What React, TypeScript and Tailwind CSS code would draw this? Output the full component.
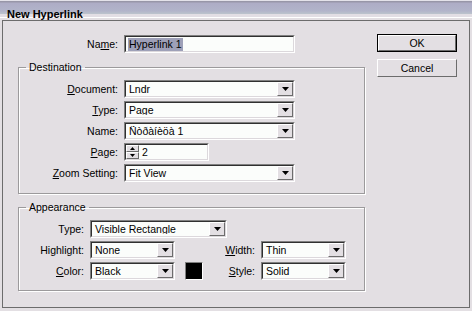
import React from "react";

const face = "font-['Liberation_Sans',Arial,sans-serif]";

function Sunken({ className = "", children }: { className?: string; children?: React.ReactNode }) {
  return (
    <div className={`border border-t-[#808080] border-l-[#808080] border-b-white border-r-white ${className}`}>
      <div className="h-full border border-t-[#303030] border-l-[#303030] border-b-[#dcd8dc] border-r-[#dcd8dc] bg-[#fbfdfb] flex items-center">
        {children}
      </div>
    </div>
  );
}

function Arrow() {
  return (
    <div className="h-full w-[16px] shrink-0 border border-t-white border-l-white border-b-[#6c6c6c] border-r-[#6c6c6c] bg-[#e3dfe3] flex items-center justify-center">
      <svg width="7" height="4" viewBox="0 0 7 4">
        <path d="M0 0h7L3.5 4z" fill="#000" />
      </svg>
    </div>
  );
}

function Dropdown({ value, w }: { value: string; w: string }) {
  return (
    <Sunken className={`h-[18px] ${w}`}>
      <span className="flex-1 pl-[3px] leading-none truncate">{value}</span>
      <Arrow />
    </Sunken>
  );
}

function Label({ children, w }: { children: React.ReactNode; w: string }) {
  return <div className={`${w} shrink-0 text-right leading-none`}>{children}</div>;
}

function Button({ children, primary }: { children: React.ReactNode; primary?: boolean }) {
  return (
    <button
      type="button"
      className={`h-[18px] w-[80px] ${primary ? "border border-black" : ""} bg-[#e3dfe3]`}
    >
      <div className="h-full border border-t-white border-l-white border-b-[#6c6c6c] border-r-[#6c6c6c] flex items-center justify-center leading-none">
        {children}
      </div>
    </button>
  );
}

function Group({ title, children }: { title: string; children: React.ReactNode }) {
  return (
    <fieldset className="w-[347px] border border-[#9c9a9c] shadow-[1px_1px_0_#fff,inset_1px_1px_0_#fff]">
      <legend className="ml-[7px] px-[3px] leading-[13px]">{title}</legend>
      {children}
    </fieldset>
  );
}

export default function App() {
  return (
    <div className={`${face} text-[10.5px] text-black w-[472px] h-[311px] bg-[#e3dfe3] overflow-hidden`}>
      {/* title bar */}
      <div className="h-[20px] bg-[linear-gradient(to_bottom,#e4e2ea_0px,#e4e2ea_1px,#9896a8_1px,#9896a8_2px,#aeacc6_3px,#b2b4ca_11px,#bcc4cc_14px,#e2dee4_14px,#e2dee4_17px,#ffffff_17px,#ffffff_18px,#e3dfe3_18px)] pl-[7px] pt-[7px]">
        <span className="text-[11px] font-bold leading-[13px]">New Hyperlink</span>
      </div>

      <div className="px-[2px]">
        <div className="h-[288px] border border-[#6c6c6c] flex pl-[15px] pt-[13px]">
          {/* left column */}
          <div className="flex flex-col">
            <div className="flex items-center gap-[6px] mt-[1px]">
              <Label w="w-[100px]">
                Na<u>m</u>e:
              </Label>
              <Sunken className="h-[18px] w-[171px]">
                <span className="ml-[2px] bg-[#9ea0b8] leading-[13px] px-[1px]">Hyperlink 1</span>
              </Sunken>
            </div>

            <div className="mt-[8px]">
              <Group title="Destination">
                <div className="flex flex-col gap-[3px] pt-[6px] pb-[11px]">
                  <div className="flex items-center gap-[6px]">
                    <Label w="w-[99px]">
                      <u>D</u>ocument:
                    </Label>
                    <Dropdown value="Lndr" w="w-[171px]" />
                  </div>
                  <div className="flex items-center gap-[6px]">
                    <Label w="w-[99px]">
                      <u>T</u>ype:
                    </Label>
                    <Dropdown value="Page" w="w-[171px]" />
                  </div>
                  <div className="flex items-center gap-[6px]">
                    <Label w="w-[99px]">Name:</Label>
                    <Dropdown value="Ñòðàíèöà 1" w="w-[171px]" />
                  </div>
                  <div className="flex items-center gap-[6px]">
                    <Label w="w-[99px]">
                      <u>P</u>age:
                    </Label>
                    <Sunken className="h-[18px] w-[85px]">
                      <div className="flex flex-col h-full w-[13px] shrink-0">
                        <div className="flex-1 border border-t-white border-l-white border-b-[#6c6c6c] border-r-[#6c6c6c] bg-[#e3dfe3] flex items-center justify-center">
                          <svg width="5" height="3" viewBox="0 0 5 3">
                            <path d="M0 3h5L2.5 0z" fill="#000" />
                          </svg>
                        </div>
                        <div className="flex-1 border border-t-white border-l-white border-b-[#6c6c6c] border-r-[#6c6c6c] bg-[#e3dfe3] flex items-center justify-center">
                          <svg width="5" height="3" viewBox="0 0 5 3">
                            <path d="M0 0h5L2.5 3z" fill="#000" />
                          </svg>
                        </div>
                      </div>
                      <span className="pl-[3px] leading-none">2</span>
                    </Sunken>
                  </div>
                  <div className="flex items-center gap-[6px]">
                    <Label w="w-[99px]">
                      <u>Z</u>oom Setting:
                    </Label>
                    <Dropdown value="Fit View" w="w-[171px]" />
                  </div>
                </div>
              </Group>
            </div>

            <div className="mt-[7px]">
              <Group title="Appearance">
                <div className="flex flex-col gap-[3px] pt-[6px] pb-[10px]">
                  <div className="flex items-center gap-[6px]">
                    <Label w="w-[65px]">Type:</Label>
                    <Dropdown value="Visible Rectangle" w="w-[137px]" />
                  </div>
                  <div className="flex items-center gap-[6px]">
                    <Label w="w-[65px]">Highlight:</Label>
                    <Dropdown value="None" w="w-[85px]" />
                    <Label w="w-[74px]">
                      <u>W</u>idth:
                    </Label>
                    <Dropdown value="Thin" w="w-[85px]" />
                  </div>
                  <div className="flex items-center gap-[6px]">
                    <Label w="w-[65px]">
                      <u>C</u>olor:
                    </Label>
                    <Dropdown value="Black" w="w-[85px]" />
                    <div className="w-[74px] flex items-center justify-between">
                      <div className="ml-[4px] w-[18px] h-[18px] border border-t-[#808080] border-l-[#808080] border-b-white border-r-white">
                        <div className="h-full bg-black" />
                      </div>
                      <span className="leading-none">
                        <u>S</u>tyle:
                      </span>
                    </div>
                    <Dropdown value="Solid" w="w-[85px]" />
                  </div>
                </div>
              </Group>
            </div>
          </div>

          {/* right column */}
          <div className="ml-[12px] flex flex-col gap-[7px]">
            <Button primary>OK</Button>
            <Button>Cancel</Button>
          </div>
        </div>
      </div>
    </div>
  );
}
